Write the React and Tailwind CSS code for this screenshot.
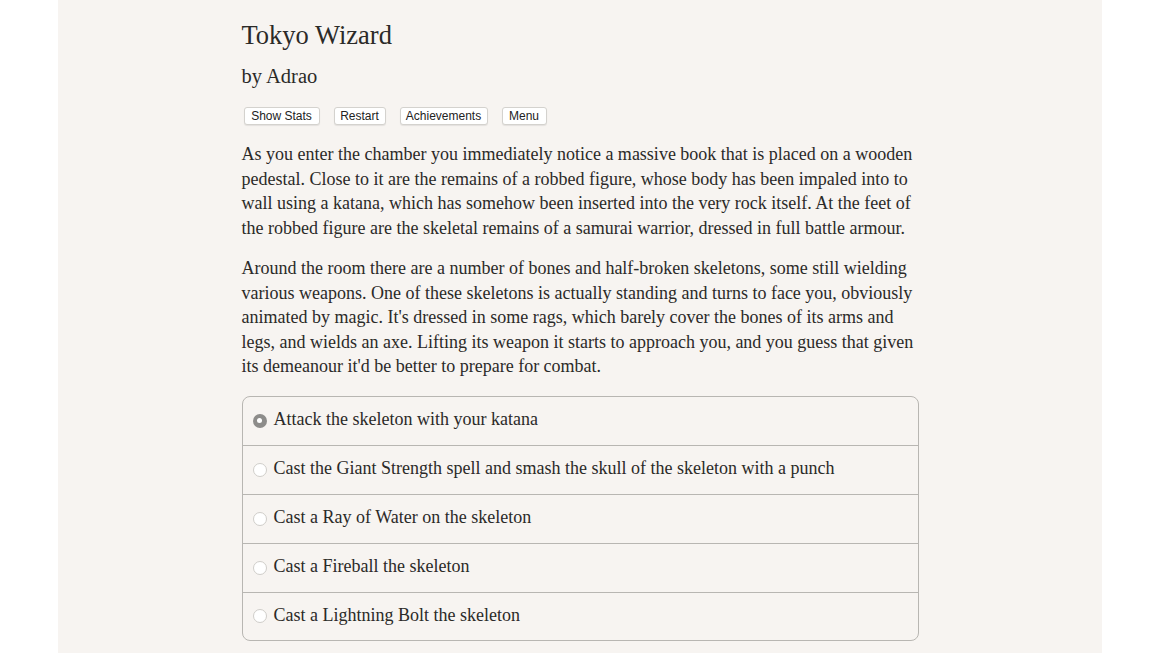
export default function App() {
  const p1 = [
    "As you enter the chamber you immediately notice a massive book that is placed on a wooden",
    "pedestal. Close to it are the remains of a robbed figure, whose body has been impaled into to",
    "wall using a katana, which has somehow been inserted into the very rock itself. At the feet of",
    "the robbed figure are the skeletal remains of a samurai warrior, dressed in full battle armour.",
  ];
  const p2 = [
    "Around the room there are a number of bones and half-broken skeletons, some still wielding",
    "various weapons. One of these skeletons is actually standing and turns to face you, obviously",
    "animated by magic. It's dressed in some rags, which barely cover the bones of its arms and",
    "legs, and wields an axe. Lifting its weapon it starts to approach you, and you guess that given",
    "its demeanour it'd be better to prepare for combat.",
  ];
  const choices = [
    "Attack the skeleton with your katana",
    "Cast the Giant Strength spell and smash the skull of the skeleton with a punch",
    "Cast a Ray of Water on the skeleton",
    "Cast a Fireball the skeleton",
    "Cast a Lightning Bolt the skeleton",
  ];
  const buttons = [
    { t: "Show Stats", w: "w-[76px]" },
    { t: "Restart", w: "w-[52px]" },
    { t: "Achievements", w: "w-[88px]" },
    { t: "Menu", w: "w-[45px]" },
  ];
  const serif = { fontFamily: '"Liberation Serif", serif' };
  return (
    <div className="w-[1160px] h-[653px] bg-white overflow-hidden">
      <div className="mx-[58px] h-[653px] bg-[#f7f4f1] text-[#2b2a28]" style={serif}>
        <div className="w-[677px] mx-auto pt-[18px]">
          <h1 className="text-[26.5px] leading-[34px] font-normal">Tokyo Wizard</h1>
          <h2 className="text-[20.5px] leading-[26px] mt-[11px] font-normal">by Adrao</h2>
          <div className="flex gap-[14px] mt-[18px] ml-[2px]" style={{ fontFamily: '"Liberation Sans", sans-serif' }}>
            {buttons.map((b) => (
              <button
                key={b.t}
                className={`${b.w} h-[18px] flex items-center justify-center text-[12px] leading-[16px] bg-white border border-[#d4d2ce] rounded-[3px] shadow-[0_1px_1px_rgba(0,0,0,0.08)] text-[#222]`}
              >
                {b.t}
              </button>
            ))}
          </div>
          <div className="mt-[17px] text-[18px] leading-[24.5px]">
            <p>
              {p1.map((l, i) => (
                <span key={i} className="block whitespace-nowrap">{l}</span>
              ))}
            </p>
            <p className="mt-[16px]">
              {p2.map((l, i) => (
                <span key={i} className="block whitespace-nowrap">{l}</span>
              ))}
            </p>
          </div>
          <div className="mt-[17px] border border-[#b8b6b2] rounded-[8px] overflow-hidden">
            {choices.map((c, i) => (
              <div
                key={i}
                className={`flex items-center ${i === 0 || i === 4 ? "h-[48px]" : "h-[49px]"} pl-[10px] pb-[2px] text-[18px] ${i > 0 ? "border-t border-[#b8b6b2]" : ""}`}
              >
                {i === 0 ? (
                  <span className="w-[14px] h-[14px] mt-[2px] rounded-full bg-[#8d8c8a] flex items-center justify-center mr-[7px]">
                    <span className="w-[5px] h-[5px] rounded-full bg-white"></span>
                  </span>
                ) : (
                  <span className="w-[14px] h-[14px] mt-[2px] rounded-full bg-white border border-[#cfcdc9] mr-[7px]"></span>
                )}
                <span>{c}</span>
              </div>
            ))}
          </div>
        </div>
      </div>
    </div>
  );
}
